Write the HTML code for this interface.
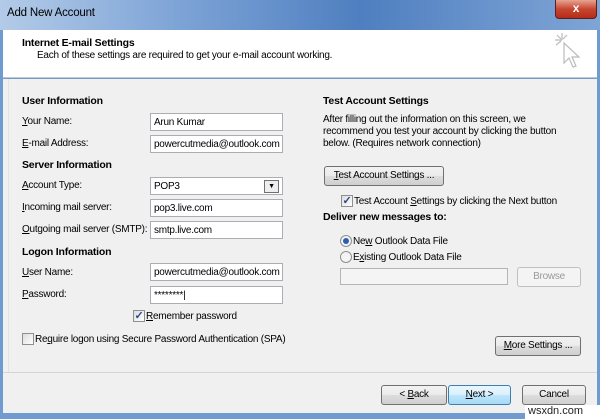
<!DOCTYPE html><html><head><style>
*{margin:0;padding:0;box-sizing:border-box}
body{width:600px;height:419px;overflow:hidden;font-family:"Liberation Sans",sans-serif;font-size:10px;letter-spacing:-0.25px;color:#000;background:#6f9bd0;position:relative}
.a{position:absolute;white-space:nowrap}
.b{font-weight:bold;font-size:10.5px;letter-spacing:-0.2px}
.in{position:absolute;background:#fff;border:1px solid #abadb3;height:18px;padding:3px 0 0 3px;font-size:10px;overflow:hidden}
.btn{position:absolute;border:1px solid #707070;border-radius:3px;background:linear-gradient(#f2f2f2,#ebebeb 50%,#dddddd 51%,#cfcfcf);text-align:center;height:20px;line-height:18px}
.cb{position:absolute;width:12px;height:12px;border:1px solid #8f8f8f;background:linear-gradient(135deg,#dcdcdc,#fff)}
.ck{color:#2a4a8a;font-size:11px;line-height:10px;text-align:center;font-weight:bold}
.rd{position:absolute;width:12px;height:12px;border-radius:50%;border:1px solid #8f8f8f;background:#f4f4f4}
u{text-decoration:underline}
</style></head><body>
<div class="a" style="left:0;top:0;width:600px;height:30px;background:linear-gradient(90deg,#b3cbe8,#7da3d6 30%,#4f7fc0 60%,#7fa5d6)"></div>
<div class="a" style="left:7px;top:7px;font-size:11.5px;letter-spacing:-0.2px;color:#000">Add New Account</div>
<div class="a" style="left:555px;top:0;width:42px;height:19px;border:1px solid #5a2020;border-top:none;border-radius:0 0 4px 4px;background:linear-gradient(#e8a493,#c7462f 50%,#b52b17);color:#fff;text-align:center;font-weight:bold;font-size:12px;line-height:17px">x</div>
<div class="a" style="left:3px;top:30px;width:594px;height:48px;background:#fff;border-bottom:1px solid #c8c8c8"></div>
<div class="a b" style="left:22px;top:37px">Internet E-mail Settings</div>
<div class="a" style="left:37px;top:50px">Each of these settings are required to get your e-mail account working.</div>
<svg class="a" style="left:552px;top:30px" width="32" height="44" viewBox="0 0 32 44" fill="none" stroke="#bbb" stroke-width="1.2"><path d="M10 3v7M3 10h7M5 5l4 4M15 5l-4 4M4 15l5-4"/><path d="M12 13l0 20 5-5 4 9 3-1-4-9 7 0z" fill="#fff"/></svg>
<div class="a" style="left:3px;top:79px;width:594px;height:334px;background:#f0f0f0"></div>
<div class="a" style="left:3px;top:372px;width:594px;height:1px;background:#d5d5d5"></div>
<div class="a" style="left:8px;top:79px;width:1px;height:293px;background:#e3e3e3"></div>
<div class="a b" style="left:22px;top:95px">User Information</div>
<div class="a" style="left:22px;top:116px"><u>Y</u>our Name:</div>
<div class="a" style="left:22px;top:138px"><u>E</u>-mail Address:</div>
<div class="a b" style="left:22px;top:159px">Server Information</div>
<div class="a" style="left:22px;top:180px"><u>A</u>ccount Type:</div>
<div class="a" style="left:22px;top:202px"><u>I</u>ncoming mail server:</div>
<div class="a" style="left:22px;top:224px"><u>O</u>utgoing mail server (SMTP):</div>
<div class="a b" style="left:22px;top:246px">Logon Information</div>
<div class="a" style="left:22px;top:267px"><u>U</u>ser Name:</div>
<div class="a" style="left:22px;top:289px"><u>P</u>assword:</div>
<div class="in" style="left:150px;top:113px;width:133px">Arun Kumar</div>
<div class="in" style="left:150px;top:135px;width:133px">powercutmedia@outlook.com</div>
<div class="in" style="left:150px;top:177px;width:133px">POP3</div>
<div class="a" style="left:264px;top:180px;width:15px;height:13px;border:1px solid #707070;background:#eee;font-size:7px;text-align:center;line-height:11px">▼</div>
<div class="in" style="left:150px;top:199px;width:133px">pop3.live.com</div>
<div class="in" style="left:150px;top:221px;width:133px">smtp.live.com</div>
<div class="in" style="left:150px;top:263px;width:133px">powercutmedia@outlook.com</div>
<div class="in" style="left:150px;top:286px;width:133px">********|</div>
<div class="cb ck" style="left:133px;top:310px">✓</div>
<div class="a" style="left:146px;top:311px"><u>R</u>emember password</div>
<div class="cb" style="left:22px;top:333px"></div>
<div class="a" style="left:35px;top:334px">Re<u>q</u>uire logon using Secure Password Authentication (SPA)</div>
<div class="a b" style="left:323px;top:95px">Test Account Settings</div>
<div class="a" style="left:323px;top:114px;line-height:12px">After filling out the information on this screen, we<br>recommend you test your account by clicking the button<br>below. (Requires network connection)</div>
<div class="btn" style="left:324px;top:166px;width:120px"><u>T</u>est Account Settings ...</div>
<div class="cb ck" style="left:341px;top:195px">✓</div>
<div class="a" style="left:354px;top:196px">Test Account <u>S</u>ettings by clicking the Next button</div>
<div class="a b" style="left:323px;top:211px">Deliver new messages to:</div>
<div class="rd" style="left:340px;top:235px"><div style="margin:2px;width:6px;height:6px;border-radius:50%;background:#2d5fb0"></div></div>
<div class="a" style="left:353px;top:236px">Ne<u>w</u> Outlook Data File</div>
<div class="rd" style="left:340px;top:251px"></div>
<div class="a" style="left:353px;top:252px">E<u>x</u>isting Outlook Data File</div>
<div class="a" style="left:340px;top:268px;width:168px;height:17px;border:1px solid #b5b5b5;background:#f4f4f4"></div>
<div class="a" style="left:517px;top:267px;width:64px;height:20px;border:1px solid #c0c0c0;border-radius:3px;background:#f4f4f4;color:#9a9a9a;text-align:center;line-height:18px">Browse</div>
<div class="btn" style="left:495px;top:336px;width:86px"><u>M</u>ore Settings ...</div>
<div class="btn" style="left:381px;top:385px;width:66px">&lt; <u>B</u>ack</div>
<div class="btn" style="left:448px;top:385px;width:63px;border-color:#3c7fb1;background:linear-gradient(#eaf6fd,#d9f0fc 50%,#bee6fd 51%,#a7d9f5)"><u>N</u>ext &gt;</div>
<div class="btn" style="left:522px;top:385px;width:64px">Cancel</div>
<div class="a" style="left:525px;top:405px;width:75px;height:14px;background:#fff;color:#222;font-size:11px;letter-spacing:0;padding-left:3px">wsxdn.com</div>
</body></html>
